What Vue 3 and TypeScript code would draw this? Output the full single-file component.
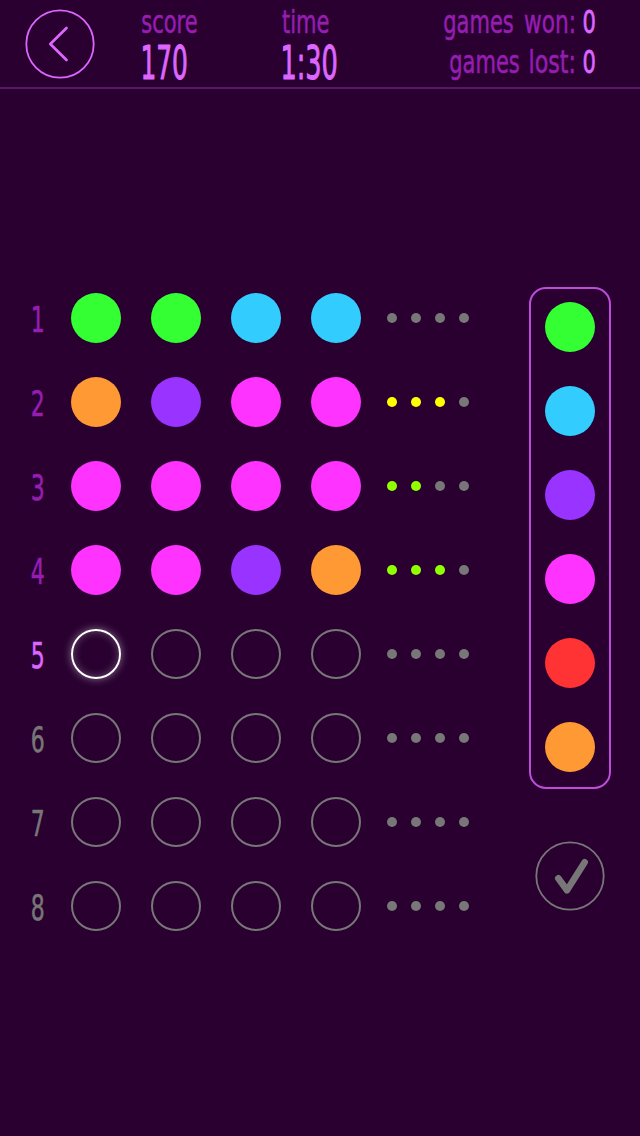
<script setup lang="ts">
interface Run { text: string; x: number; y: number; width: number; size: number; tone: string }

const stats: { name: string; width: number; runs: Run[] }[] = [
  { name: 'score', width: 140, runs: [
    { text: 'score', x: 0.2, y: 32.7, width: 56.5, size: 32, tone: 'label' },
    { text: '170', x: -0.6, y: 79.2, width: 47.5, size: 46.5, tone: 'value' },
  ] },
  { name: 'time', width: 140, runs: [
    { text: 'time', x: 1, y: 32.7, width: 47.5, size: 32, tone: 'label' },
    { text: '1:30', x: -0.6, y: 79.2, width: 57.5, size: 46.5, tone: 'value' },
  ] },
  { name: 'games', width: 180, runs: [
    { text: 'games', x: 22.3, y: 32.7, width: 70.5, size: 32, tone: 'label' },
    { text: 'won:', x: 103, y: 32.7, width: 52, size: 32, tone: 'label' },
    { text: '0', x: 161.5, y: 32.7, width: 13.4, size: 32.5, tone: 'count' },
    { text: 'games', x: 28.3, y: 72.7, width: 70.5, size: 32, tone: 'label' },
    { text: 'lost:', x: 107.5, y: 72.7, width: 47.5, size: 32, tone: 'label' },
    { text: '0', x: 161.5, y: 72.7, width: 13.4, size: 32.5, tone: 'count' },
  ] },
]

const rows = [
  { pegs: ['green', 'green', 'blue', 'blue'], hints: ['', '', '', ''], state: 'done' },
  { pegs: ['orange', 'violet', 'pink', 'pink'], hints: ['yellow', 'yellow', 'yellow', ''], state: 'done' },
  { pegs: ['pink', 'pink', 'pink', 'pink'], hints: ['lime', 'lime', '', ''], state: 'done' },
  { pegs: ['pink', 'pink', 'violet', 'orange'], hints: ['lime', 'lime', 'lime', ''], state: 'done' },
  { pegs: ['active', 'empty', 'empty', 'empty'], hints: ['', '', '', ''], state: 'current' },
  { pegs: ['empty', 'empty', 'empty', 'empty'], hints: ['', '', '', ''], state: 'next' },
  { pegs: ['empty', 'empty', 'empty', 'empty'], hints: ['', '', '', ''], state: 'next' },
  { pegs: ['empty', 'empty', 'empty', 'empty'], hints: ['', '', '', ''], state: 'next' },
]
const palette = ['green', 'blue', 'violet', 'pink', 'red', 'orange']
</script>

<template>
  <div class="game">
    <header class="bar">
      <button class="round" aria-label="Back">
        <svg width="70" height="70" viewBox="0 0 70 70">
          <circle cx="35" cy="35" r="33.7" class="ring" />
          <path d="M41.5 19 L25.3 35 L41.5 51" class="chevron" />
        </svg>
      </button>
      <div class="stats">
        <svg v-for="s in stats" :key="s.name" class="lettering" :width="s.width" height="87">
          <text v-for="(r, i) in s.runs" :key="i" :x="r.x" :y="r.y" :font-size="r.size"
            :textLength="r.width" lengthAdjust="spacingAndGlyphs" :class="r.tone">{{ r.text }}</text>
        </svg>
      </div>
    </header>
    <main class="board">
      <section class="rows">
        <div v-for="(row, i) in rows" :key="i" class="row">
          <svg class="lettering number" :class="row.state" width="20" height="50">
            <text x="2.7" y="38.9" font-size="35.8" textLength="14" lengthAdjust="spacingAndGlyphs">{{ i + 1 }}</text>
          </svg>
          <div class="pegs">
            <span v-for="(p, j) in row.pegs" :key="j" class="peg" :class="p"></span>
          </div>
          <div class="hints">
            <span v-for="(h, j) in row.hints" :key="j" class="hint" :class="h"></span>
          </div>
        </div>
      </section>
      <aside class="side">
        <div class="palette">
          <span v-for="c in palette" :key="c" class="peg" :class="c"></span>
        </div>
        <button class="round" aria-label="Confirm">
          <svg width="70" height="70" viewBox="0 0 70 70">
            <circle cx="35" cy="35" r="33.7" class="ring muted" />
            <path d="M23.3 37.3 L32 49.3 L49.7 21.3" class="check" />
          </svg>
        </button>
      </aside>
    </main>
  </div>
</template>

<style>
body { background: #290030; }
</style>

<style scoped>
.game { width: 640px; height: 1136px; background: #290030; overflow: hidden; font-family: "DejaVu Sans", sans-serif; }
.bar { box-sizing: border-box; height: 89px; padding: 9px 0 0 25px; display: flex; border-bottom: 2px solid #591769; }
.round { display: block; width: 70px; height: 70px; padding: 0; border: 0; background: none; }
.round svg { display: block; }
.ring { fill: none; stroke: #dd66ff; stroke-width: 1.8; }
.ring.muted { stroke: #777; }
.chevron { fill: none; stroke: #dd66ff; stroke-width: 2.7; stroke-linecap: round; stroke-linejoin: round; }
.check { fill: none; stroke: #777; stroke-width: 6.6; stroke-linecap: round; stroke-linejoin: round; }
.stats { display: flex; margin: -9px 0 0 46px; }
.lettering { display: block; overflow: visible; stroke-linejoin: round; }
.label { fill: #951eb0; stroke: #951eb0; stroke-width: 0.6; }
.value { fill: #dd66ff; stroke: #dd66ff; stroke-width: 1.1; }
.count { fill: #dd66ff; stroke: #dd66ff; stroke-width: 0.8; }
.board { display: flex; justify-content: space-between; padding: 198px 29px 0 28px; }
.rows { display: flex; flex-direction: column; gap: 34px; padding-top: 6px; }
.row { display: flex; align-items: center; height: 50px; }
.number { margin-right: 23px; stroke-width: 0.6; }
.done { fill: #951eb0; stroke: #951eb0; }
.current { fill: #dd66ff; stroke: #dd66ff; }
.next { fill: #777; stroke: #777; }
.pegs { display: flex; gap: 30px; }
.peg { box-sizing: border-box; display: block; width: 50px; height: 50px; border-radius: 50%; }
.green { background: #33ff33; }
.blue { background: #33ccff; }
.violet { background: #9933ff; }
.pink { background: #ff33ff; }
.red { background: #ff3333; }
.orange { background: #ff9933; }
.empty { border: 2px solid #777; }
.active { border: 2px solid #fff; box-shadow: 0 0 9px #ffffff70, inset 0 0 9px #ffffff48; }
.hints { display: flex; gap: 14px; margin-left: 26px; }
.hint { width: 10px; height: 10px; border-radius: 50%; background: #777; }
.hint.yellow { background: #ffff00; }
.hint.lime { background: #90ff00; }
.side { display: flex; flex-direction: column; align-items: center; gap: 52px; }
.palette { box-sizing: border-box; width: 82px; height: 502px; border: 2px solid #bd4cda; border-radius: 17px; padding-top: 13px; display: flex; flex-direction: column; align-items: center; gap: 34px; }
</style>
